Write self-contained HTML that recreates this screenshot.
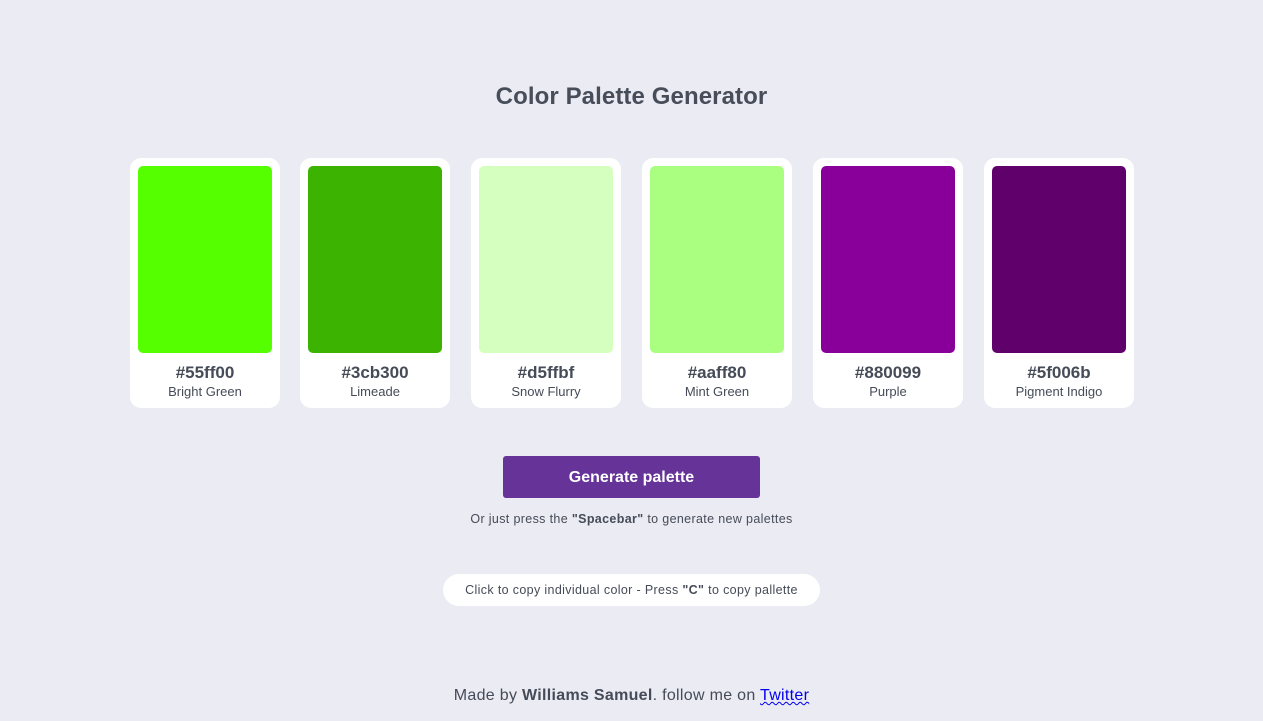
<!DOCTYPE html>
<html><head><meta charset="utf-8"><style>
*{margin:0;padding:0;box-sizing:border-box}
body{width:1263px;height:721px;background:#eaebf3;font-family:"Liberation Sans",sans-serif;color:#454b57;position:relative;overflow:hidden}
h1{position:absolute;top:83px;left:0;width:1263px;text-align:center;font-size:24px;font-weight:bold;color:#474d59;letter-spacing:0.1px}
.card{position:absolute;top:158px;width:150px;height:250px;background:#fff;border-radius:11px}
.sw{position:absolute;left:8px;top:8px;width:134px;height:187px;border-radius:5px}
.hex{position:absolute;top:205px;width:150px;text-align:center;font-size:17px;font-weight:bold;color:#454b57}
.nm{position:absolute;top:226px;width:150px;text-align:center;font-size:13px;color:#454b57}
.btn{position:absolute;left:503px;top:456px;width:257px;height:42px;background:#663399;border-radius:3px;color:#fff;font-size:16px;font-weight:bold;text-align:center;line-height:44px}
.hint{position:absolute;top:512px;width:1263px;text-align:center;font-size:12.5px;color:#454b57;letter-spacing:0.35px}
.pill{position:absolute;left:443px;top:574px;width:377px;height:32px;background:#fff;border-radius:16px;text-align:center;line-height:33px;font-size:12.5px;color:#454b57;letter-spacing:0.35px}
.foot{position:absolute;top:687px;width:1263px;text-align:center;font-size:16px;color:#454b57;letter-spacing:0.3px}
.foot a{color:#0000ee;text-decoration:underline wavy;text-decoration-thickness:1px}
</style></head><body>
<h1>Color Palette Generator</h1>
<div class="card" style="left:130px"><div class="sw" style="background:#55ff00"></div><div class="hex">#55ff00</div><div class="nm">Bright Green</div></div>
<div class="card" style="left:300px"><div class="sw" style="background:#3cb300"></div><div class="hex">#3cb300</div><div class="nm">Limeade</div></div>
<div class="card" style="left:471px"><div class="sw" style="background:#d5ffbf"></div><div class="hex">#d5ffbf</div><div class="nm">Snow Flurry</div></div>
<div class="card" style="left:642px"><div class="sw" style="background:#aaff80"></div><div class="hex">#aaff80</div><div class="nm">Mint Green</div></div>
<div class="card" style="left:813px"><div class="sw" style="background:#880099"></div><div class="hex">#880099</div><div class="nm">Purple</div></div>
<div class="card" style="left:984px"><div class="sw" style="background:#5f006b"></div><div class="hex">#5f006b</div><div class="nm">Pigment Indigo</div></div>
<div class="btn">Generate palette</div>
<div class="hint">Or just press the <b>"Spacebar"</b> to generate new palettes</div>
<div class="pill">Click to copy individual color - Press <b>"C"</b> to copy pallette</div>
<div class="foot">Made by <b>Williams Samuel</b>. follow me on <a>Twitter</a></div>
</body></html>
